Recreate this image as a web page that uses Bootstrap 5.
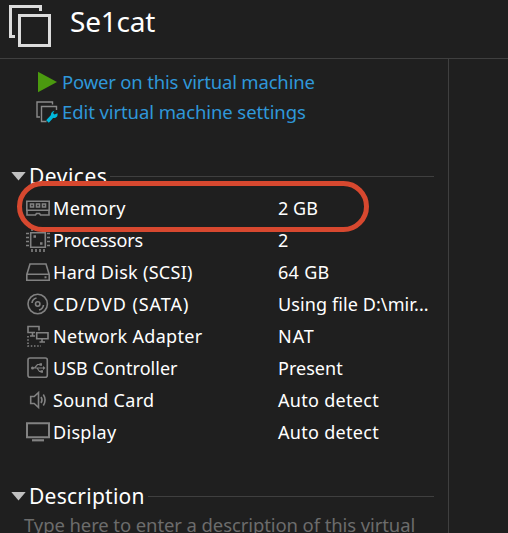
<!DOCTYPE html>
<html lang="en" data-bs-theme="dark">
<head>
<meta charset="utf-8">
<meta name="viewport" content="width=device-width, initial-scale=1">
<title>Se1cat</title>
<link href="https://cdn.jsdelivr.net/npm/bootstrap@5.3.0/dist/css/bootstrap.min.css" rel="stylesheet">
<style>
body{background:#1f1f1f;color:#fff;font-family:"Noto Sans","Open Sans",sans-serif;font-size:18px;line-height:32px;height:533px}
svg{display:block;flex:none}
.vm-head{height:59px;border-bottom:1px solid #3f3f3f;padding-left:9px}
.vm-title{font-size:28px;line-height:40px;margin:1px 0 0 19px;font-weight:400;letter-spacing:-.2px}
.vm-main{width:449px;border-right:1px solid #3f3f3f;padding-top:8px}
.vm-link{height:30px;line-height:30px;color:#2f97d9;font-size:18.5px;padding-left:36px;gap:4px}
.t-power{letter-spacing:-.18px}
.t-edit{letter-spacing:-.09px}
.sect{height:32px;padding:0 14px 0 11px}
.sect-devices{margin-top:33px}
.sect-description{margin-top:32px}
.sect h2{font-size:21px;line-height:32px;margin:0 3px;font-weight:400}
.sect h2.t-dev{letter-spacing:.5px}
.sect h2.t-desc{letter-spacing:.25px}
.rule{height:1px;background:#3f3f3f}
.dev{height:32px;padding-left:26px;letter-spacing:.3px}
.dev svg{stroke:#828282;fill:none;stroke-width:1.6}
.dev-name{width:228px;padding-left:3px}
.ls-tight{letter-spacing:-.2px}
.ls-zero{letter-spacing:.03px}
.ls-slim{letter-spacing:.1px}
.ls-wide{letter-spacing:.95px}
.marked::after{content:"";position:absolute;left:17px;top:-11px;width:352px;height:51px;border:5.500px solid #d7482f;border-radius:26px}
.hint{color:#6c6c6c;font-size:18.5px;padding-left:24px;height:21px;line-height:25px;letter-spacing:-.1px}
</style>
</head>
<body class="d-flex flex-column overflow-hidden">
<header class="vm-head d-flex flex-shrink-0">
  <svg width="42" height="52" fill="none" stroke="#dcdcdc" stroke-width="3"><path d="M31.500 11V6.500H1.500V36.500H6"/><path d="M10.500 15.500h30v30h-30z"/></svg>
  <h1 class="vm-title">Se1cat</h1>
</header>
<main class="vm-main flex-grow-1">
  <a class="vm-link d-flex align-items-center text-decoration-none" href="#"><svg width="22" height="22"><path d="M2 .7v20.600L21 11z" fill="#4b9a0f"/></svg><span class="t-power">Power on this virtual machine</span></a>
  <a class="vm-link d-flex align-items-center text-decoration-none" href="#"><svg width="22" height="22" fill="none" stroke="#8a8a8a" stroke-width="1.400"><path d="M16.500 3.500V1H1v15h3M10.500 20.500H5.500V5.500H20.500V9"/><path d="M11.500 20.500l5-5.500" stroke="#00b8dc" stroke-width="3.500"/><path d="M18.500 9.800l-1.500 2.200 1.500 1.500 3-1.300q.5 3.500-2 4.500-3.500 1-4.500-1.500-.8-4 3.500-5.400z" fill="#00b8dc" stroke="none"/></svg><span class="t-edit">Edit virtual machine settings</span></a>
  <div class="sect sect-devices d-flex align-items-center">
    <svg width="15" height="9"><path d="M.3 0h14.400L7.500 8.500z" fill="#c0c0c0"/></svg><h2 class="t-dev">Devices</h2><div class="rule flex-grow-1"></div>
  </div>
  <div class="dev marked d-flex align-items-center position-relative">
    <svg width="24" height="24"><path d="M.8 5.200h22.400v9H.8zM1 14v5h8.500l1-1.500h3l1 1.500H23v-5"/><path d="M4.500 8h3v3h-3zM10.500 8h3v3h-3zM16.500 8h3v3h-3z"/></svg>
    <span class="dev-name">Memory</span><span class="ls-zero">2 GB</span></div>
  <div class="dev d-flex align-items-center">
    <svg width="24" height="24"><path d="M4.700 4.700h14.600v14.600H4.700z"/><path d="M0 5.500h3M0 9.500h3M0 13.500h3M0 17.500h3M21 5.500h3M21 9.500h3M21 13.500h3M21 17.500h3M6 0v3M10 0v3M14 0v3M18 0v3M6 21v3M10 21v3M14 21v3M18 21v3"/><path d="M7.500 8.500h2.500M14 15.500h2.500" stroke-width="2.500"/></svg>
    <span class="dev-name ls-tight">Processors</span><span>2</span></div>
  <div class="dev d-flex align-items-center">
    <svg width="24" height="24"><path d="M.8 14.500L4 4h16l3.200 10.500v5.700H.8zM.8 14.300h22.400"/><path d="M18.500 17.300h2" stroke-width="2"/></svg>
    <span class="dev-name">Hard Disk (SCSI)</span><span>64 GB</span></div>
  <div class="dev d-flex align-items-center">
    <svg width="24" height="24"><circle cx="11.700" cy="12" r="9.700"/><circle cx="11.700" cy="12" r="2.200"/><path d="M6 11q.5-4 4.500-5M17.500 13q-.5 4-4.500 5"/></svg>
    <span class="dev-name ls-wide">CD/DVD (SATA)</span><span class="ls-slim">Using file D:\mir...</span></div>
  <div class="dev d-flex align-items-center">
    <svg width="24" height="24"><path d="M9 8.500H2v-6h11v4M6.500 9v3M4 12h5M10.700 8.700H22v6H10.700zM16 15v3M13.500 18H19"/><path d="M2 12v10h13" stroke-dasharray="1.500 1.700"/></svg>
    <span class="dev-name">Network Adapter</span><span class="ls-wide">NAT</span></div>
  <div class="dev d-flex align-items-center">
    <svg width="24" height="24"><rect x="2" y="2" width="19.300" height="19.300" rx="2"/><path d="M6 12h12M8.500 12l3-3.500H14M11 12l2.500 3.500H15" stroke-width="1.200"/><circle cx="6.500" cy="12" r="1.500" fill="#828282" stroke="none"/><path d="M17 10l2.500 2-2.500 2zM13.500 7.200H16v2.500h-2.500zM14.500 14.200H17v2.500h-2.500z" fill="#828282" stroke="none"/></svg>
    <span class="dev-name ls-zero">USB Controller</span><span class="ls-zero">Present</span></div>
  <div class="dev d-flex align-items-center">
    <svg width="24" height="24"><path d="M4.700 8.500h3.500l4.300-4v15l-4.300-4H4.700zM15 9q2 3 0 6M17.300 6.500q3.500 5.500 0 11"/></svg>
    <span class="dev-name">Sound Card</span><span>Auto detect</span></div>
  <div class="dev d-flex align-items-center">
    <svg width="24" height="24"><path d="M1 3.300h22v13.900H1z" stroke-width="2"/><path d="M6 20.300h12" stroke-width="2.200"/></svg>
    <span class="dev-name">Display</span><span>Auto detect</span></div>
  <div class="sect sect-description d-flex align-items-center">
    <svg width="15" height="9"><path d="M.3 0h14.400L7.500 8.500z" fill="#c0c0c0"/></svg><h2 class="t-desc">Description</h2><div class="rule flex-grow-1"></div>
  </div>
  <div class="hint text-nowrap">Type here to enter a description of this virtual</div>
</main>
<script src="https://cdn.jsdelivr.net/npm/bootstrap@5.3.0/dist/js/bootstrap.bundle.min.js"></script>
</body>
</html>
